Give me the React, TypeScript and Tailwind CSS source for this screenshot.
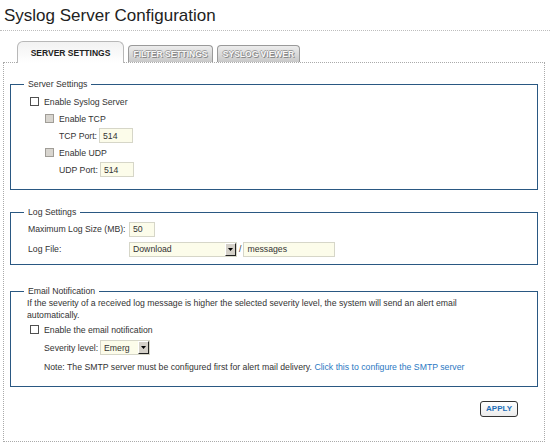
import React from 'react';

// checkbox, plain or greyed out
function Box({ disabled }: { disabled?: boolean }) {
  return (
    <span
      className={`inline-block w-[9px] h-[9px] shrink-0 border ${
        disabled ? 'bg-[#d8d5cf] border-[#a09d97]' : 'bg-white border-[#505050]'
      }`}
    />
  );
}

function Input({ value, w }: { value: string; w: string }) {
  return (
    <span className={`inline-flex items-center shrink-0 h-[15px] ${w} px-[3px] bg-[#fcfcea] border border-[#d6d6c8] text-[#333]`}>
      {value}
    </span>
  );
}

function Select({ value, w }: { value: string; w: string }) {
  return (
    <span className={`inline-flex items-center shrink-0 h-[15px] ${w} bg-[#fcfcea] border border-[#d6d6c8] text-[#333]`}>
      <span className="flex-1 px-[3px]">{value}</span>
      <span className="flex items-center justify-center w-[11px] h-[13px] bg-[#d4d0c8] border border-t-white border-l-white border-r-[#222] border-b-[#222]">
        <svg width="5" height="3" viewBox="0 0 5 3">
          <path d="M0 0H5L2.5 3Z" fill="#000" />
        </svg>
      </span>
    </span>
  );
}

function Fieldset({ title, className, children }: { title: string; className?: string; children: React.ReactNode }) {
  return (
    <fieldset className={`border border-[#2a5882] pl-[13px] pr-[10px] ${className ?? ''}`}>
      <legend className="px-[4px] leading-[12px] text-[#333]">{title}</legend>
      {children}
    </fieldset>
  );
}

const tabGray =
  'h-[17px] flex items-center justify-center rounded-t-[4px] border border-b-0 border-[#9a9a9a] bg-gradient-to-b from-[#ededed] to-[#c8c8c8] text-[#f8f8f8] font-bold text-[8.5px] [text-shadow:1px_1px_0_#8a8a8a,-1px_0_0_#a0a0a0,0_-1px_0_#a0a0a0]';

export default function App() {
  return (
    <div className="w-[550px] h-[445px] bg-white text-[8.7px] leading-[12px] whitespace-nowrap text-[#333] font-['Liberation_Sans',Arial,sans-serif]">
      <div className="h-[31px] border-b border-dotted border-[#bdbdbd] pl-[4px] pt-[6px] text-[17px] leading-[20px] text-[#222]">
        Syslog Server Configuration
      </div>

      {/* tabs */}
      <div className="h-[31px] flex items-end gap-[4px] pl-[17px] relative z-10">
        <div className="h-[22px] w-[107px] -mb-px flex items-center justify-center rounded-t-[6px] border border-b-0 border-[#b8b8b8] bg-gradient-to-b from-[#f2f2f2] to-white text-[#222] font-bold text-[8.5px]">
          SERVER SETTINGS
        </div>
        <div className={`${tabGray} w-[85px]`}>FILTER SETTINGS</div>
        <div className={`${tabGray} w-[83px]`}>SYSLOG VIEWER</div>
      </div>

      <div className="ml-[3px] w-[542px] h-[380px] border border-dotted border-[#aaa] px-[6px] pt-[15px]">
        <Fieldset title="Server Settings" className="pb-[11px]">
          <div className="pl-[6px] pt-[3px]">
            <div className="h-[17px] flex items-center gap-[5px]">
              <Box />
              <span>Enable Syslog Server</span>
            </div>
            <div className="pl-[15px]">
              <div className="h-[17px] flex items-center gap-[5px]">
                <Box disabled />
                <span>Enable TCP</span>
              </div>
              <div className="h-[17px] flex items-center gap-[2px] pl-[14px]">
                <span>TCP Port:</span>
                <Input value="514" w="w-[34px]" />
              </div>
              <div className="h-[17px] flex items-center gap-[5px]">
                <Box disabled />
                <span>Enable UDP</span>
              </div>
              <div className="h-[17px] flex items-center gap-[2px] pl-[14px]">
                <span>UDP Port:</span>
                <Input value="514" w="w-[34px]" />
              </div>
            </div>
          </div>
        </Fieldset>

        <Fieldset title="Log Settings" className="mt-[16px] pb-[5px]">
          <div className="pl-[4px] pt-[1px]">
            <div className="h-[20px] flex items-center">
              <span className="w-[101px] shrink-0">Maximum Log Size (MB):</span>
              <Input value="50" w="w-[26px]" />
            </div>
            <div className="h-[20px] flex items-center">
              <span className="w-[101px] shrink-0">Log File:</span>
              <Select value="Download" w="w-[108px]" />
              <span className="px-[2px]">/</span>
              <Input value="messages" w="w-[92px]" />
            </div>
          </div>
        </Fieldset>

        <Fieldset title="Email Notification" className="mt-[20px] pb-[9px]">
          <div className="pl-[3px]">
            <p>
              If the severity of a received log message is higher the selected severity level, the system will send an alert email
              <br />
              automatically.
            </p>
          </div>
          <div className="pl-[6px]">
            <div className="h-[17px] flex items-center gap-[5px]">
              <Box />
              <span>Enable the email notification</span>
            </div>
            <div className="pl-[14px]">
              <div className="h-[19px] flex items-center gap-[2px]">
                <span>Severity level:</span>
                <Select value="Emerg" w="w-[50px]" />
              </div>
              <div className="h-[20px] flex items-center">
                <span>
                  Note: The SMTP server must be configured first for alert mail delivery.{' '}
                  <a className="text-[#2a78c2] cursor-pointer">Click this to configure the SMTP server</a>
                </span>
              </div>
            </div>
          </div>
        </Fieldset>

        <div className="flex justify-end pr-[20px] mt-[14px]">
          <button className="h-[16px] w-[38px] rounded-[3px] border border-[#333] bg-gradient-to-b from-white to-[#ececec] text-[#1f6fb8] font-bold text-[8px] leading-none">
            APPLY
          </button>
        </div>
      </div>
    </div>
  );
}
